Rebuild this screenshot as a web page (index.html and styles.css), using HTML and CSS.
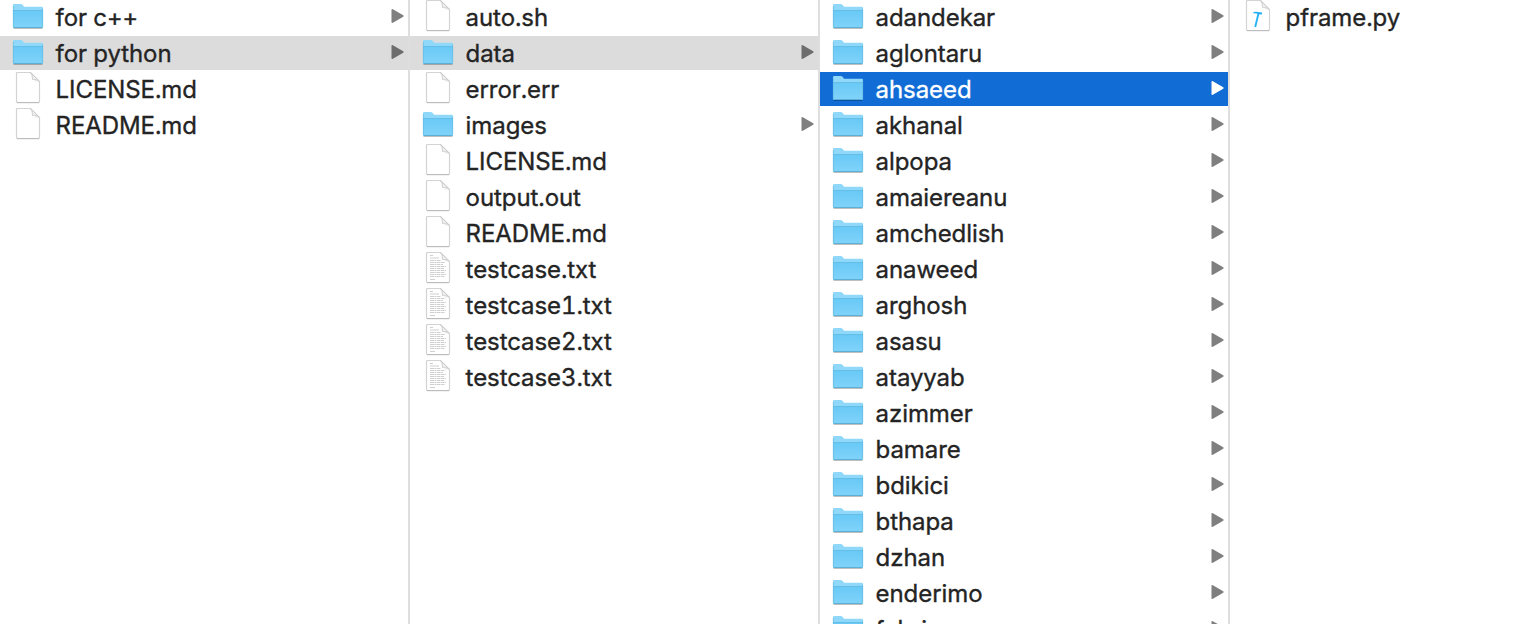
FILE: index.html
```html
<!DOCTYPE html>
<html lang="en">
<head>
<meta charset="utf-8">
<title>Files</title>
<link rel="stylesheet" href="styles.css">
</head>
<body>
<svg class="defs" aria-hidden="true">
  <defs>
    <linearGradient id="folder-fill" x1="0" y1="0" x2="0" y2="1"><stop offset="0" stop-color="#69c9f6"/><stop offset="1" stop-color="#80d3fa"/></linearGradient>
    <linearGradient id="fold-fill" x1="0" y1="1" x2="1" y2="0"><stop offset="0" stop-color="#fff"/><stop offset="1" stop-color="#d8d8d8"/></linearGradient>
    <symbol id="folder" viewBox="0 0 32 36">
      <path d="M1.500 28.500h29" stroke="#000" stroke-opacity=".25" stroke-width="1"/>
      <path d="M1 5.200Q1 4 2.200 4h6.600q1 0 1.700.8l1.200 1.500q.4.5 1.200.5h16.900q1.200 0 1.200 1.200v5H1z" fill="#8fd8fa"/>
      <path d="M1 10.500h30v16.400q0 1.100-1.100 1.100H2.100Q1 28 1 26.900z" fill="url(#folder-fill)"/>
      <path d="M1 10.500h30" stroke="#63bfe8" stroke-width="1"/>
      <path d="M1.500 27.500h29" stroke="#5cb0d6" stroke-width="1"/>
      <path d="M1.300 6v21M30.700 8.500v18.500" stroke="#5fb7de" stroke-width=".6"/>
    </symbol>
    <symbol id="page" viewBox="0 0 32 36">
      <path d="M4.500 1.500q0-1 1-1H18.500L27.500 9.500V29.500q0 1-1 1h-21q-1 0-1-1z" fill="#fff" stroke="#d3d3d3" stroke-width="1.200"/>
      <path d="M5 30.700h22" stroke="#b4b4b4" stroke-width=".9"/>
      <path d="M18.500.500L27.500 9.500H23V5z" fill="#eee"/>
      <path d="M18.500.500q2 1.500 2 6.500v.500h1q4.500 0 6 2z" fill="url(#fold-fill)" stroke="#cacaca" stroke-width=".9"/>
    </symbol>
    <symbol id="lines" viewBox="0 0 32 36">
      <g fill="none" stroke="#cfcfcf" stroke-width="1"><path d="M8 3.500h3M8 6h9"/><path d="M8 8.500h11M8 10.500h15M8 12.500h13M8 14.500h16M8 16.500h14M8 18.500h16M8 20.500h15M8 22.500h16M8 24.500h15" stroke-dasharray="4 .5 2 .5 3 .5"/><path d="M8 27.500h5"/></g>
    </symbol>
    <symbol id="hammer" viewBox="0 0 32 36">
      <path d="M16.500 13.500L13.200 27" stroke="#27b2f5" stroke-width="1.900"/>
      <path d="M11.500 12q3-.6 6 .3l2.500.2v2l-3-.3q-3-1-5.500-.8z" fill="#20acf1"/>
    </symbol>
    <symbol id="arrow" viewBox="0 0 14 16"><path d="M.800 1.200Q1.200.800 2.300 1.400L12.200 7.200q1 .8 0 1.600L2.300 14.600Q1 15.200.500 14.500V1.500z" fill="currentColor"/></symbol>
  </defs>
</svg>
<main class="browser">
  <ul class="column">
    <li class="row"><svg class="icon"><use href="#folder"/></svg><span class="name">for c++</span><svg class="arrow"><use href="#arrow"/></svg></li>
    <li class="row open"><svg class="icon"><use href="#folder"/></svg><span class="name">for python</span><svg class="arrow"><use href="#arrow"/></svg></li>
    <li class="row"><svg class="icon"><use href="#page"/></svg><span class="name">LICENSE.md</span></li>
    <li class="row"><svg class="icon"><use href="#page"/></svg><span class="name">README.md</span></li>
  </ul>
  <ul class="column">
    <li class="row"><svg class="icon"><use href="#page"/></svg><span class="name">auto.sh</span></li>
    <li class="row open"><svg class="icon"><use href="#folder"/></svg><span class="name">data</span><svg class="arrow"><use href="#arrow"/></svg></li>
    <li class="row"><svg class="icon"><use href="#page"/></svg><span class="name">error.err</span></li>
    <li class="row"><svg class="icon"><use href="#folder"/></svg><span class="name">images</span><svg class="arrow"><use href="#arrow"/></svg></li>
    <li class="row"><svg class="icon"><use href="#page"/></svg><span class="name">LICENSE.md</span></li>
    <li class="row"><svg class="icon"><use href="#page"/></svg><span class="name">output.out</span></li>
    <li class="row"><svg class="icon"><use href="#page"/></svg><span class="name">README.md</span></li>
    <li class="row"><svg class="icon"><use href="#page"/><use href="#lines"/></svg><span class="name">testcase.txt</span></li>
    <li class="row"><svg class="icon"><use href="#page"/><use href="#lines"/></svg><span class="name">testcase1.txt</span></li>
    <li class="row"><svg class="icon"><use href="#page"/><use href="#lines"/></svg><span class="name">testcase2.txt</span></li>
    <li class="row"><svg class="icon"><use href="#page"/><use href="#lines"/></svg><span class="name">testcase3.txt</span></li>
  </ul>
  <ul class="column">
    <li class="row"><svg class="icon"><use href="#folder"/></svg><span class="name">adandekar</span><svg class="arrow"><use href="#arrow"/></svg></li>
    <li class="row"><svg class="icon"><use href="#folder"/></svg><span class="name">aglontaru</span><svg class="arrow"><use href="#arrow"/></svg></li>
    <li class="row selected"><svg class="icon"><use href="#folder"/></svg><span class="name">ahsaeed</span><svg class="arrow"><use href="#arrow"/></svg></li>
    <li class="row"><svg class="icon"><use href="#folder"/></svg><span class="name">akhanal</span><svg class="arrow"><use href="#arrow"/></svg></li>
    <li class="row"><svg class="icon"><use href="#folder"/></svg><span class="name">alpopa</span><svg class="arrow"><use href="#arrow"/></svg></li>
    <li class="row"><svg class="icon"><use href="#folder"/></svg><span class="name">amaiereanu</span><svg class="arrow"><use href="#arrow"/></svg></li>
    <li class="row"><svg class="icon"><use href="#folder"/></svg><span class="name">amchedlish</span><svg class="arrow"><use href="#arrow"/></svg></li>
    <li class="row"><svg class="icon"><use href="#folder"/></svg><span class="name">anaweed</span><svg class="arrow"><use href="#arrow"/></svg></li>
    <li class="row"><svg class="icon"><use href="#folder"/></svg><span class="name">arghosh</span><svg class="arrow"><use href="#arrow"/></svg></li>
    <li class="row"><svg class="icon"><use href="#folder"/></svg><span class="name">asasu</span><svg class="arrow"><use href="#arrow"/></svg></li>
    <li class="row"><svg class="icon"><use href="#folder"/></svg><span class="name">atayyab</span><svg class="arrow"><use href="#arrow"/></svg></li>
    <li class="row"><svg class="icon"><use href="#folder"/></svg><span class="name">azimmer</span><svg class="arrow"><use href="#arrow"/></svg></li>
    <li class="row"><svg class="icon"><use href="#folder"/></svg><span class="name">bamare</span><svg class="arrow"><use href="#arrow"/></svg></li>
    <li class="row"><svg class="icon"><use href="#folder"/></svg><span class="name">bdikici</span><svg class="arrow"><use href="#arrow"/></svg></li>
    <li class="row"><svg class="icon"><use href="#folder"/></svg><span class="name">bthapa</span><svg class="arrow"><use href="#arrow"/></svg></li>
    <li class="row"><svg class="icon"><use href="#folder"/></svg><span class="name">dzhan</span><svg class="arrow"><use href="#arrow"/></svg></li>
    <li class="row"><svg class="icon"><use href="#folder"/></svg><span class="name">enderimo</span><svg class="arrow"><use href="#arrow"/></svg></li>
    <li class="row"><svg class="icon"><use href="#folder"/></svg><span class="name">fabri</span><svg class="arrow"><use href="#arrow"/></svg></li>
  </ul>
  <ul class="column last">
    <li class="row"><svg class="icon"><use href="#page"/><use href="#hammer"/></svg><span class="name">pframe.py</span></li>
  </ul>
</main>
</body>
</html>
```
FILE: styles.css
```css
* { box-sizing: border-box; }
html, body { margin: 0; height: 100%; overflow: hidden; background: #fff; }
.defs { display: block; width: 0; height: 0; }
.browser {
  display: grid;
  grid-template-columns: 410px 410px 410px 1fr;
  height: 624px;
  overflow: hidden;
  font-family: Inter, "Liberation Sans", sans-serif;
  font-size: 24px;
  font-variant-numeric: tabular-nums;
  color: #242424;
}
.column {
  list-style: none;
  margin: 0;
  padding: 0;
  border-right: 2px solid #dedede;
  height: 624px;
  overflow: hidden;
}
.column.last { border-right: 0; }
.row {
  display: flex;
  align-items: flex-start;
  height: 34px;
  margin-bottom: 2px;
  padding: 0 3px 0 12px;
}
.icon { flex: none; width: 32px; height: 36px; }
.name {
  flex: 1;
  margin-left: 11.6px;
  line-height: 35px;
  letter-spacing: -0.08px;
  white-space: nowrap;
  -webkit-text-stroke: 0.35px currentColor;
}
.arrow { flex: none; width: 14px; height: 16px; margin-top: 8px; color: #7f7f7f; }
.open { background: #dcdcdc; }
.open .arrow { color: #6d6d6d; }
.selected { background: #116cd6; color: #fff; }
.selected .arrow { color: #fff; }
```
